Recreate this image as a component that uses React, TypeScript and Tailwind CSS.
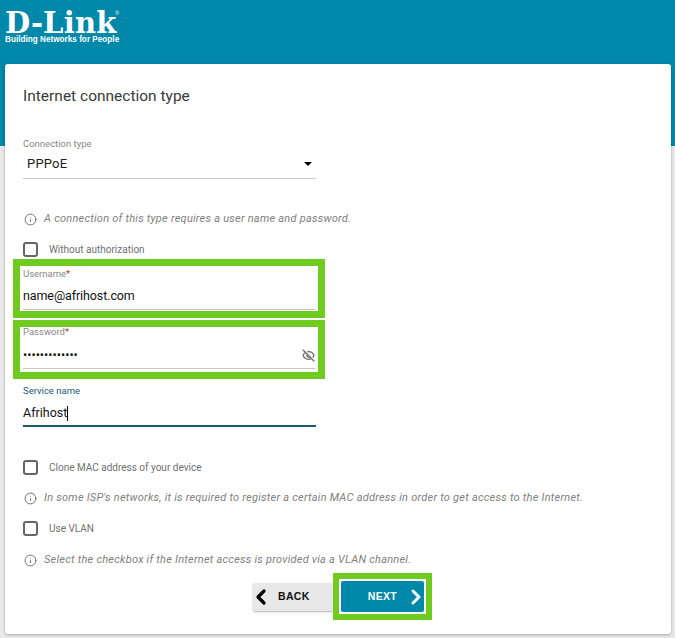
import { ChevronLeft, ChevronRight, EyeOff, Info } from "lucide-react";

function InfoRow({ text, className }: { text: string; className: string }) {
  return (
    <div className={`flex h-[14px] items-center gap-[7px] ${className}`}>
      <Info size={13} strokeWidth={1.7} className="ml-[1px] shrink-0 text-[#666]" />
      <span className="whitespace-nowrap text-[11px] tracking-[0.24px] text-[#808080] italic">{text}</span>
    </div>
  );
}

function CheckRow({ label, className }: { label: string; className: string }) {
  return (
    <div className={`flex h-[16px] items-center ${className}`}>
      <span className="h-[15px] w-[15px] rounded-[3px] border-2 border-[#666]" />
      <span className="ml-[11px] text-[10px] text-[#707070]">{label}</span>
    </div>
  );
}

function FramedField({
  label,
  className,
  lineClassName,
  labelClassName,
  children,
}: {
  label: string;
  className: string;
  lineClassName: string;
  labelClassName: string;
  children: React.ReactNode;
}) {
  return (
    <div className={`-ml-[10px] h-[59px] w-[312px] border-[7px] border-[#6fcb1f] ${className}`}>
      <div className="h-[45px] px-[3px]">
        <div className={`border-b border-[#c8c8c8] ${lineClassName}`}>
          <div className={`h-[14px] text-[9.5px] leading-[14px] text-[#888] ${labelClassName}`}>
            {label}
            <span className="text-[#b04040]">*</span>
          </div>
          {children}
        </div>
      </div>
    </div>
  );
}

export default function App() {
  return (
    <div className="h-[638px] w-[675px] overflow-hidden bg-[#e9e9e9] font-['Roboto',sans-serif]">
      <header className="h-[146px] bg-[#0088aa] pt-[11px] pl-[5px] text-white">
        <div className="relative h-[24px] w-[113px] font-['DejaVu_Serif',serif] text-[29px] leading-[24px] font-bold tracking-[0.2px] whitespace-nowrap">
          D-Link
          <span className="absolute -top-[1px] -right-[1px] font-['Liberation_Sans',sans-serif] text-[5px] leading-[6px] font-normal tracking-normal">®</span>
        </div>
        <div className="font-['Liberation_Sans',sans-serif] text-[8.2px] leading-[9px] font-bold whitespace-nowrap">
          Building Networks for People
        </div>
      </header>

      <main className="relative mx-[5px] -mt-[82px] h-[570px] w-[666px] rounded-[3px] bg-white px-[18px] shadow-[0_1px_3px_rgba(0,0,0,0.3)]">
        <h1 className="pt-[22px] text-[15.5px] leading-[20px] text-[#3a3a3a]">Internet connection type</h1>

        <div className="mt-[31px] h-[14px] text-[9.5px] leading-[14px] text-[#888]">Connection type</div>
        <div className="flex h-[28px] w-[293px] items-center justify-between border-b border-[#c8c8c8] pr-[4px] pb-[2px] pl-[4px]">
          <span className="text-[13px] tracking-[0.2px] text-[#222]">PPPoE</span>
          <span className="h-0 w-0 border-x-[4px] border-t-[4px] border-x-transparent border-t-black" />
        </div>

        <InfoRow text="A connection of this type requires a user name and password." className="mt-[33px]" />
        <CheckRow label="Without authorization" className="mt-[15px]" />

        <FramedField label="Username" className="mt-[2px]" lineClassName="h-[44px]" labelClassName="pt-px">
          <div className="mt-[6px] text-[12.5px] leading-[20px] tracking-[-0.1px] text-[#111]">name@afrihost.com</div>
        </FramedField>

        <FramedField label="Password" className="mt-[2px]" lineClassName="h-[44px]" labelClassName="-mt-[2px]">
          <div className="mt-[6px] flex items-center justify-between">
            <span className="text-[12.5px] leading-[20px] text-[#111]">•••••••••••••</span>
            <EyeOff size={13} strokeWidth={2.4} className="text-[#6a6a6a]" />
          </div>
        </FramedField>

        <div className="mt-[5px] h-[14px] text-[9.5px] leading-[14px] text-[#1c5a70]">Service name</div>
        <div className="flex h-[29px] w-[293px] items-center border-b-2 border-[#1a5a6e] pt-[3px]">
          <span className="text-[12.5px] text-[#111]">Afrihost</span>
          <span className="h-[15px] w-px bg-black" />
        </div>

        <CheckRow label="Clone MAC address of your device" className="mt-[32px]" />
        <InfoRow text="In some ISP's networks, it is required to register a certain MAC address in order to get access to the Internet." className="mt-[16px]" />
        <CheckRow label="Use VLAN" className="mt-[15px]" />
        <InfoRow text="Select the checkbox if the Internet access is provided via a VLAN channel." className="mt-[17px]" />

        <div className="mt-[6px] flex items-center pl-[310px]">
          <button type="button" className="-ml-[80px] flex h-[28px] w-[80px] items-center rounded-l-[2px] bg-[#e8e8e8] font-['Liberation_Sans',sans-serif] text-[10.5px] font-bold tracking-[0.3px] text-[#111] shadow-[0_1px_2px_rgba(0,0,0,0.3)]">
            <ChevronLeft size={24} strokeWidth={3.2} className="-ml-[4px] text-black" />
            <span className="ml-[5px]">BACK</span>
          </button>
          <div className="h-[47px] w-[99px] border-[6px] border-[#6fcb1f] bg-white p-[2px]">
            <button type="button" className="flex h-[31px] w-[83px] items-center justify-end rounded-[2px] bg-[#0088aa] font-['Liberation_Sans',sans-serif] text-[10.5px] font-bold tracking-[0.3px] text-white">
              <span className="mr-[7px]">NEXT</span>
              <ChevronRight size={24} strokeWidth={3} className="-mr-[4px]" />
            </button>
          </div>
        </div>
      </main>
    </div>
  );
}
